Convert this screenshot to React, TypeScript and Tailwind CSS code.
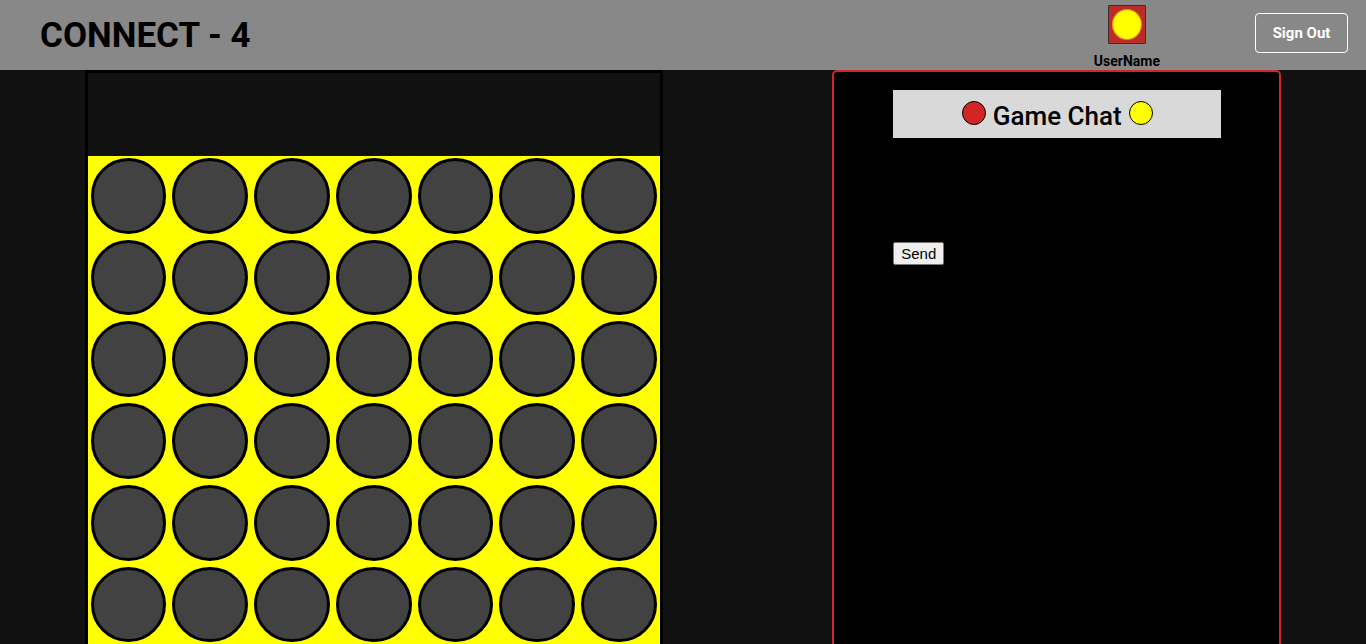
const COLUMNS = 7;
const ROWS = 6;

function Header() {
  return (
    <header className="flex h-[70px] items-center justify-between bg-[#888888] pr-[18px] pl-10">
      <h1 className="pt-[2px] text-[35px] leading-[40px] font-bold">CONNECT - 4</h1>
      <div className="flex items-start gap-[95px]">
        <div className="flex flex-col items-center gap-[9px] pt-[3px]">
          <svg className="h-10 w-10" viewBox="0 0 40 40" role="img" aria-label="Avatar">
            <rect x="1.5" y="1.5" width="37" height="38" rx="0.5" fill="#b92d28" stroke="#3a302f" />
            <ellipse cx="20" cy="20.5" rx="14.5" ry="15" fill="#ffff00" stroke="#f58220" strokeWidth="1.2" />
          </svg>
          <span className="text-[14px] leading-4 font-bold">UserName</span>
        </div>
        <button
          type="button"
          className="mt-3 h-10 w-[93px] rounded border border-white text-[15px] leading-5 font-bold text-white"
        >
          Sign Out
        </button>
      </div>
    </header>
  );
}

function Board() {
  return (
    <section aria-label="Board" className="w-[578px] border-[3px] border-black">
      <div className="h-[83px]" />
      <div className="grid grid-cols-7 gap-[6px] bg-[#ffff00] px-[3px] pt-[2px] pb-[3px]">
        {Array.from({ length: ROWS * COLUMNS }, (_, i) => (
          <div key={i} className="aspect-square rounded-full border-[3px] border-black bg-[#424242]" />
        ))}
      </div>
    </section>
  );
}

function Chat() {
  return (
    <section
      aria-label="Game chat"
      className="w-[449px] rounded-[5px] border-2 border-[#d22626] bg-black pt-[18px] pr-[58px] pl-[59px]"
    >
      <div className="flex h-12 justify-center gap-[7px] bg-[#d9d9d9] pt-[11px]">
        <span className="h-6 w-6 rounded-full border border-black bg-[#d22626]" />
        <h2 className="text-[26px] leading-[30px] font-medium">Game Chat</h2>
        <span className="h-6 w-6 rounded-full border border-black bg-[#ffff00]" />
      </div>
      <button
        type="submit"
        className="mt-[104px] block h-[23px] rounded-[2px] border border-[#767676] bg-[#efefef] px-[7px] font-['Liberation_Sans',Arial,sans-serif] text-[15px] leading-[17px]"
      >
        Send
      </button>
    </section>
  );
}

export default function App() {
  return (
    <div className="min-h-screen bg-[#111111] font-[Roboto,sans-serif] text-black">
      <Header />
      <main className="flex justify-around">
        <Board />
        <Chat />
      </main>
    </div>
  );
}
